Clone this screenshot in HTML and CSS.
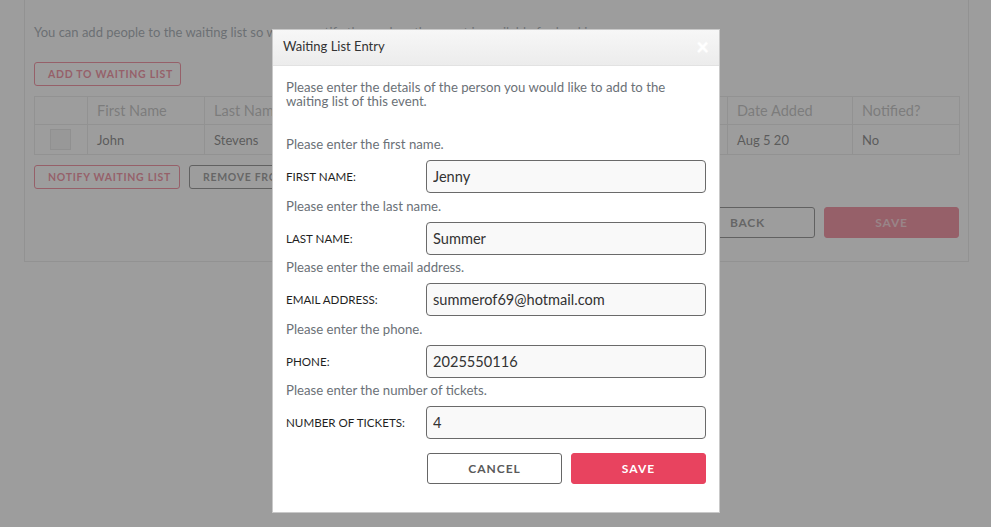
FILE: index.html
```html
<!DOCTYPE html>
<html lang="en">
<head>
<meta charset="utf-8">
<title>Waiting List</title>
<link rel="stylesheet" href="styles.css">
</head>
<body>
<div class="card">
  <p class="lead">You can add people to the waiting list so we can notify them when the event is available for booking.</p>
  <div class="top-actions">
    <button class="obtn pink add">ADD TO WAITING LIST</button>
  </div>
  <table class="wl">
    <thead>
      <tr>
        <th class="c-check"></th>
        <th class="c-first">First Name</th>
        <th class="c-last">Last Name</th>
        <th class="c-email">Email Address</th>
        <th class="c-phone">Phone</th>
        <th class="c-tix">Tickets</th>
        <th class="c-date">Date Added</th>
        <th class="c-notif">Notified?</th>
      </tr>
    </thead>
    <tbody>
      <tr>
        <td class="c-check"><span class="checkbox"></span></td>
        <td>John</td>
        <td>Stevens</td>
        <td>john.stevens@gmail.com</td>
        <td>2025550148</td>
        <td>2</td>
        <td>Aug 5 20</td>
        <td>No</td>
      </tr>
    </tbody>
  </table>
  <div class="row-actions">
    <button class="obtn pink notify">NOTIFY WAITING LIST</button>
    <button class="obtn gray remove">REMOVE FROM WAITING LIST</button>
  </div>
  <div class="page-actions">
    <button class="pbtn back">BACK</button>
    <button class="pbtn save-dim">SAVE</button>
  </div>
</div>

<div class="overlay"></div>

<div class="modal">
  <div class="modal-header">
    <span class="modal-title">Waiting List Entry</span>
    <span class="close">&times;</span>
  </div>
  <div class="modal-body">
    <p class="intro">Please enter the details of the person you would like to add to the waiting list of this event.</p>
    <div class="field">
      <div class="hint">Please enter the first name.</div>
      <div class="frow"><label class="flabel">FIRST NAME:</label><input class="finput" type="text" value="Jenny"></div>
    </div>
    <div class="field">
      <div class="hint">Please enter the last name.</div>
      <div class="frow"><label class="flabel">LAST NAME:</label><input class="finput" type="text" value="Summer"></div>
    </div>
    <div class="field">
      <div class="hint">Please enter the email address.</div>
      <div class="frow"><label class="flabel">EMAIL ADDRESS:</label><input class="finput" type="text" value="summerof69@hotmail.com"></div>
    </div>
    <div class="field">
      <div class="hint">Please enter the phone.</div>
      <div class="frow"><label class="flabel">PHONE:</label><input class="finput" type="text" value="2025550116"></div>
    </div>
    <div class="field">
      <div class="hint">Please enter the number of tickets.</div>
      <div class="frow"><label class="flabel">NUMBER OF TICKETS:</label><input class="finput" type="text" value="4"></div>
    </div>
    <div class="modal-actions">
      <button class="mbtn cancel">CANCEL</button>
      <button class="mbtn save">SAVE</button>
    </div>
  </div>
</div>
</body>
</html>
```

FILE: styles.css
```css
* { box-sizing: border-box; }

html, body {
  margin: 0;
  padding: 0;
  background: #ffffff;
  font-family: Lato, "Open Sans", "DejaVu Sans", sans-serif;
  overflow: hidden;
}

button { font-family: inherit; cursor: pointer; }

/* ---------- background page ---------- */
.card {
  width: 945px;
  margin-left: 24px;
  border: 1px solid #dcdcdc;
  border-top: none;
  padding: 23px 9px 23px 9px;
}

.lead {
  margin: 0;
  font-size: 13px;
  line-height: 18px;
  color: #66727e;
  white-space: nowrap;
}

.top-actions {
  margin-top: 21px;
  display: flex;
}

.obtn {
  display: block;
  height: 24px;
  background: #fff;
  border-radius: 3px;
  font-size: 10.5px;
  font-weight: 700;
  letter-spacing: 0.7px;
  padding: 0 13px;
  white-space: nowrap;
  text-align: center;
}
.obtn.pink { border: 1px solid #e8435f; color: #e8435f; }
.obtn.gray { border: 1px solid #444; color: #555; }

.add { width: 147px; }

.wl {
  margin-top: 10px;
  width: 925px;
  border-collapse: collapse;
  table-layout: fixed;
}
.wl th, .wl td {
  border: 1px solid #dcdcdc;
  text-align: left;
  padding: 0 9px;
  white-space: nowrap;
  overflow: hidden;
  line-height: 16px;
}
.wl th {
  height: 28px;
  font-size: 14.5px;
  font-weight: 400;
  color: #9a9a9a;
}
.wl td {
  height: 30px;
  font-size: 13px;
  color: #333;
}
.c-check { width: 53px; }
.c-first { width: 117px; }
.c-last { width: 117px; }
.c-email { width: 210px; }
.c-phone { width: 120px; }
.c-tix { width: 76px; }
.c-date { width: 125px; }
.c-notif { width: 107px; }

.wl td.c-check { padding: 0 0 0 15px; }
.checkbox {
  display: block;
  width: 21px;
  height: 21px;
  background: #f0f0f0;
  border: 1px solid #d6d6d6;
}

.row-actions {
  margin-top: 10px;
  display: flex;
  gap: 9px;
}
.notify { width: 146px; }

.page-actions {
  margin-top: 18px;
  display: flex;
  justify-content: flex-end;
  gap: 9px;
}
.pbtn {
  display: block;
  width: 135px;
  height: 31px;
  border-radius: 3px;
  font-size: 12px;
  font-weight: 700;
  letter-spacing: 0.8px;
}
.back { background: #fff; border: 1px solid #444; color: #555; }
.save-dim { background: #e8435f; border: 1px solid #e8435f; color: #f2b3be; }

/* ---------- overlay ---------- */
.overlay {
  position: fixed;
  inset: 0;
  background: rgba(110, 110, 110, 0.68);
}

/* ---------- modal ---------- */
.modal {
  position: fixed;
  left: 272px;
  top: 29px;
  width: 448px;
  background: #fff;
  border: 1px solid #c9c9c9;
}

.modal-header {
  height: 36px;
  background: linear-gradient(#f7f7f7, #ececec);
  border-bottom: 1px solid #e2e2e2;
  display: flex;
  align-items: center;
  justify-content: space-between;
  padding: 0 10px 0 10px;
}
.modal-title {
  font-size: 13px;
  color: #333;
  margin-top: -4px;
}
.close {
  color: #fff;
  font-size: 22px;
  font-weight: 700;
  line-height: 1;
  text-shadow: 0 0 2px rgba(255,255,255,0.8);
  margin-right: 0;
  margin-top: -2px;
}

.modal-body {
  padding: 14px 13px 28px 13px;
}
.intro {
  margin: 0 0 29px 0;
  max-width: 398px;
  font-size: 13.2px;
  line-height: 14px;
  color: #6b7177;
}

.field { padding-bottom: 5.5px; }
.hint {
  font-size: 13.2px;
  line-height: 15px;
  color: #6b7177;
}
.frow {
  margin-top: 8px;
  display: flex;
  align-items: center;
}
.flabel {
  width: 140px;
  font-size: 11.6px;
  color: #1f1f1f;
}
.finput {
  width: 280px;
  height: 33px;
  border: 1px solid #6a6a6a;
  border-radius: 4px;
  background: #f9f9f9;
  padding: 0 6px;
  font-family: inherit;
  font-size: 14.6px;
  color: #333;
  outline: none;
}

.modal-actions {
  margin-top: 8.5px;
  display: flex;
  justify-content: flex-end;
  gap: 9px;
}
.mbtn {
  display: block;
  width: 135px;
  height: 31px;
  border-radius: 3px;
  font-size: 12px;
  font-weight: 700;
  letter-spacing: 1px;
}
.cancel { background: #fff; border: 1px solid #666; color: #5a5a5a; }
.save { background: #e8435f; border: 1px solid #e8435f; color: #fff; }
```
